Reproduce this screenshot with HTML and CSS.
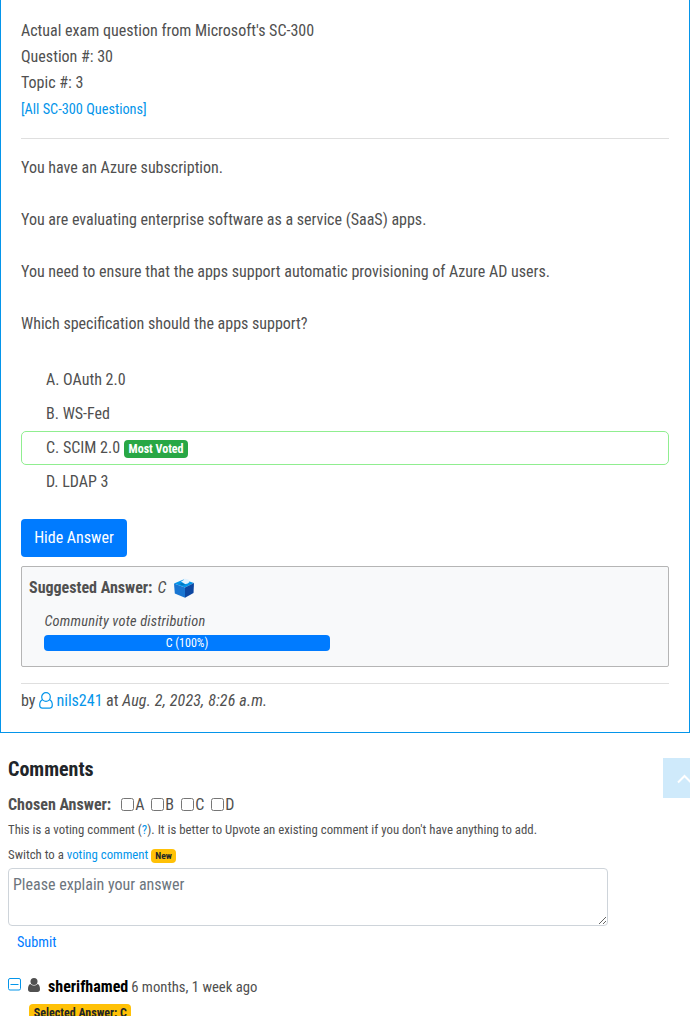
FILE: index.html
```html
<!DOCTYPE html>
<html lang="en">
<head>
<meta charset="utf-8">
<title>SC-300 Topic 3 Question 30</title>
<link rel="stylesheet" href="styles.css">
</head>
<body>
<main class="question">
  <div class="intro">
    <div>Actual exam question from Microsoft's SC-300</div>
    <div>Question #: 30</div>
    <div>Topic #: 3</div>
    <div><a class="all-link" href="#">[All SC-300 Questions]</a></div>
  </div>
  <div class="body-text">
    <p>You have an Azure subscription.</p>
    <p>You are evaluating enterprise software as a service (SaaS) apps.</p>
    <p>You need to ensure that the apps support automatic provisioning of Azure AD users.</p>
    <p>Which specification should the apps support?</p>
  </div>
  <ul class="choices">
    <li>A. OAuth 2.0</li>
    <li>B. WS-Fed</li>
    <li class="voted">C. SCIM 2.0 <span class="badge green">Most Voted</span></li>
    <li>D. LDAP 3</li>
  </ul>
  <button class="hide-btn">Hide Answer</button>
  <section class="answer">
    <div class="suggested"><strong>Suggested Answer:</strong><em>C</em>
      <svg class="ballot" width="20" height="20" viewBox="0 0 20 20">
        <path d="M0 5.500 9.500 1.500 20 5 11 9.500z" fill="#0495ea"/>
        <path d="M0 5.500 11 9.500V19.700L.8 15.500z" fill="#1976d2"/>
        <path d="M20 5 11 9.500V19.700L19.500 15z" fill="#0d47a1"/>
        <path d="M5 6 8 5 11.500 6.800 8.500 7.500z" fill="#0277bd"/>
        <path d="M7 3.500Q10 2.500 10.500 .5L14.500 1.500 15.500 4Q13.500 6.500 11 6z" fill="#e3f2fd"/>
      </svg>
    </div>
    <div class="distribution">Community vote distribution</div>
    <div class="bar">C (100%)</div>
  </section>
  <div class="byline"><span>by</span>
    <svg width="14" height="17" viewBox="0 0 14 17" fill="none" stroke="#0495ea" stroke-width="1.200"><circle cx="7" cy="5" r="4.300"/><path d="M3.500 7.700C1.500 8.500.7 10.300.7 13c0 2 1 3.200 2.600 3.200h7.400c1.600 0 2.600-1.200 2.600-3.200 0-2.700-.8-4.500-2.800-5.300"/></svg>
    <a href="#">nils241</a><span>at <em>Aug. 2, 2023, 8:26 a.m.</em></span>
  </div>
</main>
<section class="comments">
  <h2>Comments</h2>
  <div class="chosen"><strong>Chosen Answer:</strong>
    <label><input type="checkbox">A</label><label><input type="checkbox">B</label><label><input type="checkbox">C</label><label><input type="checkbox">D</label>
  </div>
  <div class="note">This is a voting comment (<a href="#">?</a>). It is better to Upvote an existing comment if you don't have anything to add.</div>
  <div class="note switch">Switch to a <a href="#">voting comment</a> <span class="badge new">New</span></div>
  <textarea placeholder="Please explain your answer"></textarea>
  <a class="submit" href="#">Submit</a>
  <div class="comment-head">
    <svg class="collapse" width="13" height="13" viewBox="0 0 13 13" fill="none" stroke="#0495ea"><rect x=".5" y=".5" width="12" height="11.500" rx="1.500"/><path d="M2.500 6.500h8"/></svg>
    <svg class="user" width="12" height="14" viewBox="0 0 12 14" fill="#505050"><circle cx="6" cy="3.500" r="3.500"/><path d="M2.500 6C.8 6.500 0 8.300 0 11.200 0 13 1 14 2.500 14h7c1.500 0 2.500-1 2.500-2.800 0-2.900-.8-4.700-2.500-5.200C7.500 8 4.500 8 2.500 6z"/></svg>
    <b>sherifhamed</b><span class="ago">6 months, 1 week ago</span>
  </div>
  <span class="badge selected">Selected Answer: C</span>
</section>
<a class="to-top" href="#"><svg width="16" height="10" viewBox="0 0 16 10" fill="none" stroke="#fff" stroke-width="2"><path d="M1 8.500 7.500 2 14 8.500"/></svg></a>
</body>
</html>
```

FILE: styles.css
```css
* { box-sizing: border-box; }
body {
  margin: 0;
  height: 1016px;
  overflow: hidden;
  background: #fff;
  color: #505050;
  font-family: "Roboto Condensed", Roboto, sans-serif;
  font-stretch: 75%;
  font-size: 16px;
  line-height: 26px;
}
a { color: #0495ea; text-decoration: none; }
p { margin: 0 0 26px; }
.question {
  height: 733px;
  border: 1px solid #0495ea;
  border-top: 0;
  padding: 18px 20px 0;
}
.intro { height: 121px; border-bottom: 1px solid #dfdfdf; }
.all-link { font-size: 14.300px; }
.body-text { padding-top: 16px; height: 224px; }
.choices { list-style: none; margin: 0; padding: 0; }
.choices li { height: 34px; padding: 4px 25px; }
.choices .voted { border: 1px solid #90ee90; border-radius: 5px; padding: 3px 24px; }
.badge {
  display: inline-block;
  font-size: 12px;
  font-weight: 700;
  line-height: 12px;
  padding: 3px 4.800px;
  border-radius: 4px;
  vertical-align: baseline;
}
.green { background: #28a745; color: #fff; }
.hide-btn {
  display: block;
  width: 106px;
  height: 38px;
  margin-top: 20px;
  padding: 0;
  border: 0;
  border-radius: 4px;
  background: #007bff;
  color: #fff;
  font: inherit;
}
.answer {
  height: 101px;
  margin-top: 9px;
  padding: 8px 7px;
  border: 1px solid #b5b5b5;
  border-radius: 2px;
  background: #f8f9fa;
}
.suggested { display: flex; height: 26px; align-items: center; }
.suggested em { margin: 0 8px 0 5px; }
.ballot { margin-bottom: 1px; }
.distribution { margin: 8px 0 0 15.500px; font-size: 14.400px; font-style: italic; letter-spacing: .2px; height: 26px; }
.bar {
  width: 286px;
  height: 16px;
  margin-left: 15px;
  border-radius: 4px;
  background: #007bff;
  color: #fff;
  font-size: 12px;
  line-height: 16px;
  text-align: center;
}
.byline { display: flex; align-items: center; gap: 3.500px; margin-top: 16px; padding-top: 4px; border-top: 1px solid #dfdfdf; }
.byline svg { margin-bottom: 1px; }
.byline em { letter-spacing: .18px; }
.comments { padding: 22px 8px 0; }
h2 { margin: 0; color: #212529; font-size: 20px; line-height: 28px; }
.chosen { display: flex; height: 26px; margin-top: 9px; align-items: center; }
.chosen strong { margin-right: 10px; }
.chosen label { display: flex; align-items: center; width: 30px; }
.chosen input { width: 13px; height: 13px; margin: 0 1px 2px 0; }
.note { font-size: 12.800px; height: 25px; line-height: 24px; }
.switch { height: 25px; }
.new { background: #ffc107; color: #212529; font-size: 9.600px; line-height: 10px; padding: 2px 4px; }
textarea {
  display: block;
  width: 600px;
  height: 58px;
  padding: 3px 4px;
  border: 1px solid #ced4da;
  border-radius: 4px;
  font: inherit;
}
textarea::placeholder { color: #6c757d; }
.submit { display: block; padding: 3px 9px 0; color: #007bff; font-size: 14.200px; }
.comment-head { display: flex; align-items: center; height: 26px; margin-top: 19px; }
.collapse { margin: 0 7px 5px 0; }
.user { margin: 0 8px 5px 0; }
.comment-head b { color: #000; margin-right: 3px; }
.ago { font-size: 14.700px; line-height: 24px; margin-bottom: 1px; }
.selected { display: block; width: 102px; margin: 4px 0 0 21px; background: #ffc107; color: #212529; white-space: nowrap; }
.to-top {
  position: fixed;
  left: 663px;
  top: 758px;
  width: 40px;
  height: 40px;
  padding: 8px 0 0 14px;
  background: #cfeafb;
}
```
